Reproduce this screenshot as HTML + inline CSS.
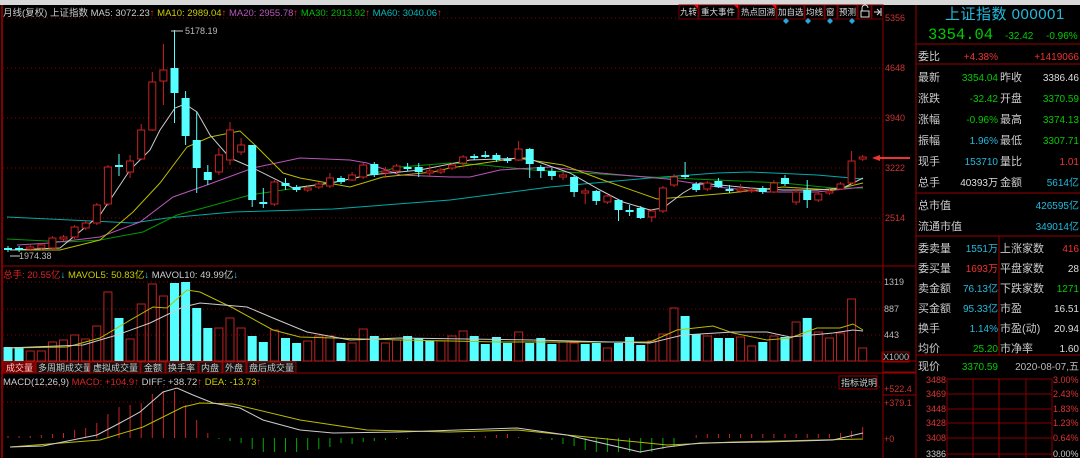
<!DOCTYPE html>
<html><head><meta charset="utf-8"><style>
html,body{margin:0;padding:0;background:#000;width:1080px;height:458px;overflow:hidden;font-family:"Liberation Sans","Noto Sans CJK SC",sans-serif}
svg{position:absolute;left:0;top:0}
.t{font-family:"Liberation Sans","Noto Sans CJK SC",sans-serif}
</style></head><body>
<svg id="s" width="1080" height="458" viewBox="0 0 1080 458" xmlns="http://www.w3.org/2000/svg">
<rect width="1080" height="458" fill="#000"/>
<rect width="1080" height="5" fill="#d8d8d8"/>
<line x1="2" y1="5" x2="2" y2="458" stroke="#a00" stroke-width="1.5"/>
<line x1="883" y1="5" x2="883" y2="458" stroke="#900"/>
<line x1="916" y1="5" x2="916" y2="458" stroke="#900"/>
<g stroke="#800" stroke-dasharray="1,3">
<line x1="3" y1="18" x2="883" y2="18"/><line x1="3" y1="68" x2="883" y2="68"/><line x1="3" y1="118" x2="883" y2="118"/><line x1="3" y1="168" x2="883" y2="168"/><line x1="3" y1="218" x2="883" y2="218"/>
<line x1="3" y1="282" x2="883" y2="282"/><line x1="3" y1="309" x2="883" y2="309"/><line x1="3" y1="335" x2="883" y2="335"/>
<line x1="3" y1="387" x2="883" y2="387"/><line x1="3" y1="402" x2="883" y2="402"/>
</g>
<line x1="3" y1="266" x2="916" y2="266" stroke="#900"/>
<line x1="3" y1="361" x2="916" y2="361" stroke="#900"/>
<line x1="3" y1="373" x2="916" y2="373" stroke="#900"/>
<g id="g"></g>
<g class="t" font-size="10">
<text x="3" y="16" fill="#ccc" font-size="9.5">月线(复权) 上证指数 MA5: 3072.23<tspan fill="#f22">↑</tspan> <tspan fill="#cc0">MA10: 2989.04</tspan><tspan fill="#f22">↑</tspan> <tspan fill="#b5b">MA20: 2955.78</tspan><tspan fill="#f22">↑</tspan> <tspan fill="#0b0">MA30: 2913.92</tspan><tspan fill="#f22">↑</tspan> <tspan fill="#0bb">MA60: 3040.06</tspan><tspan fill="#f22">↑</tspan></text>
<line x1="171" y1="31" x2="183" y2="31" stroke="#ccc"/>
<text x="185" y="34" fill="#bbb" font-size="9">5178.19</text>
<line x1="10" y1="256" x2="20" y2="256" stroke="#ccc"/>
<text x="19" y="259" fill="#bbb" font-size="9">1974.38</text>
<text x="3" y="278" fill="#d22" font-size="9.5">总手: 20.55亿<tspan fill="#3cf">↓</tspan> <tspan fill="#cc0">MAVOL5: 50.83亿</tspan><tspan fill="#3cf">↓</tspan> <tspan fill="#ccc">MAVOL10: 49.99亿</tspan><tspan fill="#3cf">↓</tspan></text>
<text x="3" y="385" fill="#ccc" font-size="9.5">MACD(12,26,9) <tspan fill="#d22">MACD: +104.9↑</tspan> <tspan fill="#ccc">DIFF: +38.72</tspan><tspan fill="#f22">↑</tspan> <tspan fill="#cc0">DEA: -13.73</tspan><tspan fill="#f22">↑</tspan></text>
<g fill="#c33" font-size="9">
<text x="885" y="21">5356</text><text x="885" y="71">4648</text><text x="885" y="121">3940</text><text x="885" y="171">3222</text><text x="885" y="221">2514</text>
<text x="884" y="392">+522.4</text><text x="884" y="406">+379.1</text><text x="884" y="442">+0</text>
</g>
<g fill="#bbb" font-size="9"><text x="884" y="285">1319</text><text x="884" y="312">887</text><text x="884" y="338">443</text></g>
<rect x="882" y="352" width="27" height="10" fill="none" stroke="#900"/>
<text x="883" y="360" fill="#bbb" font-size="9">X1000</text>
</g>
<g class="t" font-size="9" fill="#ccc">
<rect x="3" y="362" width="32" height="11" fill="#700" stroke="#900"/><text x="6" y="371" fill="#fcc">成交量</text>
<rect x="36" y="362" width="53" height="11" fill="#111" stroke="#900"/><text x="38" y="371">多周期成交量</text>
<rect x="90" y="362" width="50" height="11" fill="#111" stroke="#900"/><text x="93" y="371">虚拟成交量</text>
<rect x="141" y="362" width="24" height="11" fill="#111" stroke="#900"/><text x="144" y="371">金额</text>
<rect x="166" y="362" width="32" height="11" fill="#111" stroke="#900"/><text x="168" y="371">换手率</text>
<rect x="199" y="362" width="23" height="11" fill="#111" stroke="#900"/><text x="201" y="371">内盘</text>
<rect x="223" y="362" width="23" height="11" fill="#111" stroke="#900"/><text x="225" y="371">外盘</text>
<rect x="247" y="362" width="49" height="11" fill="#111" stroke="#900"/><text x="249" y="371">盘后成交量</text>
<rect x="839" y="376" width="38" height="13" fill="#000" stroke="#900"/><text x="841" y="386">指标说明</text>
</g>
<g class="t" font-size="8.5" fill="#ddd" stroke-width="1">
<g fill="#000" stroke="#700"><rect x="679" y="5" width="19" height="14"/><rect x="699" y="5" width="39" height="14"/><rect x="739" y="5" width="37" height="14"/><rect x="777" y="5" width="27" height="14"/><rect x="805" y="5" width="19" height="14"/><rect x="825" y="5" width="12" height="14"/><rect x="838" y="5" width="19" height="14"/><rect x="858" y="5" width="13" height="14"/><rect x="872" y="5" width="11" height="14"/></g>
<text x="680" y="15">九转</text><text x="701" y="15">重大事件</text><text x="741" y="15">热点回溯</text><text x="778" y="15">加自选</text><text x="806" y="15">均线</text><text x="826" y="15">窗</text><text x="839" y="15">预测</text>
<path d="M861 11h8v6h-8z M862 11v-3a3 3 0 0 1 6 0" fill="none" stroke="#ddd"/>
<path d="M874 12h5 M877 9l3 3-3 3 M881 8v8" stroke="#ddd" fill="none"/>
<g fill="#f00"><path d="M694 5h4v4z"/><path d="M734 5h4v4z"/><path d="M772 5h4v4z"/></g>
<g fill="#2ad"><path d="M786 18l3 3-3 3-3-3z"/><path d="M808 18l3 3-3 3-3-3z"/><path d="M830 18l3 3-3 3-3-3z"/><path d="M852 18l3 3-3 3-3-3z"/></g>
</g>
<path d="M872 158l8-3v2h30v2h-30v2z" fill="#e33"/>
<g class="t" font-size="11">
<text x="945" y="19" fill="#2bd" font-size="15" letter-spacing="0.5">上证指数 000001</text>
<text x="928" y="39" fill="#0c0" font-size="15.5" font-family="Liberation Mono,monospace">3354.04</text>
<text x="1005" y="39" fill="#0c0" font-size="10">-32.42</text>
<text x="1046" y="39" fill="#0c0" font-size="10">-0.96%</text>
<g stroke="#900"><line x1="916" y1="44" x2="1080" y2="44"/><line x1="916" y1="64" x2="1080" y2="64"/><line x1="916" y1="193" x2="1080" y2="193"/><line x1="916" y1="236" x2="1080" y2="236"/><line x1="916" y1="355" x2="1080" y2="355"/><line x1="999" y1="236" x2="999" y2="355"/><line x1="883" y1="395" x2="916" y2="395"/><line x1="883" y1="372" x2="916" y2="372"/></g>
<g fill="#ccc"><text x="918" y="60">委比</text><text x="918" y="81">最新</text><text x="918" y="102">涨跌</text><text x="918" y="123">涨幅</text><text x="918" y="144">振幅</text><text x="918" y="165">现手</text><text x="918" y="186">总手</text><text x="918" y="209">总市值</text><text x="918" y="230">流通市值</text>
<text x="1000" y="81">昨收</text><text x="1000" y="102">开盘</text><text x="1000" y="123">最高</text><text x="1000" y="144">最低</text><text x="1000" y="165">量比</text><text x="1000" y="186">金额</text>
<text x="918" y="252">委卖量</text><text x="918" y="272">委买量</text><text x="918" y="292">卖金额</text><text x="918" y="312">买金额</text><text x="918" y="332">换手</text><text x="918" y="352">均价</text>
<text x="1000" y="252">上涨家数</text><text x="1000" y="272">平盘家数</text><text x="1000" y="292">下跌家数</text><text x="1000" y="312">市盈</text><text x="1000" y="332">市盈(动)</text><text x="1000" y="352">市净率</text>
<text x="918" y="370">现价</text></g>
<g font-size="10" text-anchor="end">
<text x="998" y="60" fill="#e33">+4.38%</text><text x="1079" y="60" fill="#e33">+1419066</text>
<text x="998" y="81" fill="#0c0">3354.04</text><text x="1079" y="81" fill="#ddd">3386.46</text>
<text x="998" y="102" fill="#0c0">-32.42</text><text x="1079" y="102" fill="#0c0">3370.59</text>
<text x="998" y="123" fill="#0c0">-0.96%</text><text x="1079" y="123" fill="#0c0">3374.13</text>
<text x="998" y="144" fill="#2bd">1.96%</text><text x="1079" y="144" fill="#0c0">3307.71</text>
<text x="998" y="165" fill="#2bd">153710</text><text x="1079" y="165" fill="#e33">1.01</text>
<text x="998" y="186" fill="#ddd">40393万</text><text x="1079" y="186" fill="#2bd">5614亿</text>
<text x="1079" y="209" fill="#2bd">426595亿</text><text x="1079" y="230" fill="#2bd">349014亿</text>
<text x="998" y="252" fill="#2bd">1551万</text><text x="1079" y="252" fill="#e33">416</text>
<text x="998" y="272" fill="#e33">1693万</text><text x="1079" y="272" fill="#ddd">28</text>
<text x="998" y="292" fill="#2bd">76.13亿</text><text x="1079" y="292" fill="#0c0">1271</text>
<text x="998" y="312" fill="#2bd">95.33亿</text><text x="1079" y="312" fill="#ddd">16.51</text>
<text x="998" y="332" fill="#2bd">1.14%</text><text x="1079" y="332" fill="#ddd">20.94</text>
<text x="998" y="352" fill="#0c0">25.20</text><text x="1079" y="352" fill="#ddd">1.60</text>
<text x="998" y="370" fill="#0c0">3370.59</text><text x="1079" y="370" fill="#bbb">2020-08-07,五</text>
</g>
<g stroke="#800"><rect x="947" y="379" width="105" height="80" fill="none"/>
<line x1="947" y1="394" x2="1052" y2="394"/><line x1="947" y1="409" x2="1052" y2="409"/><line x1="947" y1="423" x2="1052" y2="423"/><line x1="947" y1="438" x2="1052" y2="438"/><line x1="947" y1="454" x2="1052" y2="454"/>
<line x1="973" y1="379" x2="973" y2="458"/><line x1="999" y1="379" x2="999" y2="458" stroke="#a00"/><line x1="1026" y1="379" x2="1026" y2="458"/></g>
<g font-size="9" fill="#d33"><text x="926" y="383">3488</text><text x="926" y="397">3469</text><text x="926" y="412">3448</text><text x="926" y="426">3428</text><text x="926" y="441">3408</text><text x="926" y="457" fill="#ccc">3386</text>
<text x="1053" y="383">3.00%</text><text x="1053" y="397">2.43%</text><text x="1053" y="412">1.83%</text><text x="1053" y="426">1.23%</text><text x="1053" y="441">0.64%</text><text x="1053" y="457" fill="#ccc">0.00%</text></g>
</g>
</svg>
<script>
var C=[[248,250,'c'],[248,250,'c'],[247,249,'r'],[245,248,'r'],[238,248,'r'],[237,239,'r',235,241],[227,237,'r'],[223,228,'r'],[205,223,'r'],[167,204,'r'],[165,167,'c',154,176],[161,172,'r',155,178],[130,159,'r',124,160],[82,130,'r',72,131],[70,81,'r',44,105],[68,93,'c',30,123],[98,136,'c',91,145],[140,168,'c',112,193],[172,180,'c',165,185],[155,172,'r',148,175],[130,160,'r',122,165],[145,152,'r',138,155],[145,200,'c',145,207],[202,204,'c',188,208],[182,204,'r'],[183,186,'c',178,190],[187,190,'c'],[188,190,'r'],[184,187,'r'],[178,186,'r',173,188],[178,182,'c'],[175,180,'r',172,181],[165,177,'r'],[164,175,'c'],[171,173,'r',167,178],[166,171,'r'],[167,169,'c',163,171],[167,172,'c',163,177],[171,173,'r',165,177],[170,172,'r'],[165,168,'r'],[157,163,'r'],[156,158,'c'],[155,157,'c',151,158],[155,160,'c'],[159,161,'c'],[149,160,'r',141,161],[149,164,'c',148,178],[167,171,'c',165,178],[171,176,'c',168,180],[175,177,'r',172,180],[177,192,'c',175,197],[191,193,'r',188,204],[191,201,'c',190,205],[196,202,'r'],[200,210,'c',199,221],[210,212,'c',205,216],[208,218,'c',206,219],[211,217,'r',209,222],[188,211,'r'],[177,185,'r',174,187],[175,177,'c',162,179],[184,190,'c'],[183,189,'r'],[181,187,'c',178,188],[189,191,'c',185,193],[189,191,'r',184,193],[190,191,'r'],[188,192,'c'],[183,192,'r',180,193],[178,184,'c',175,186],[192,202,'r',188,205],[190,200,'c',180,208],[194,200,'r',192,202],[191,193,'r'],[184,189,'r',182,190],[161,183,'r',151,184],[157,159,'r',155,161]];
var V=[[347,'c'],[347,'c'],[351,'r'],[351,'r'],[342,'r'],[340,'r'],[335,'r'],[339,'r'],[326,'r'],[292,'r'],[318,'c'],[339,'r'],[304,'r'],[284,'r'],[296,'r'],[283,'c'],[282,'c'],[308,'c'],[328,'c'],[328,'r'],[318,'r'],[328,'r'],[336,'c'],[342,'c'],[330,'r'],[338,'c'],[343,'c'],[341,'r'],[336,'r'],[336,'r'],[343,'c'],[343,'r'],[329,'r'],[336,'c'],[343,'r'],[340,'r'],
[336,'c'],[338,'c'],[341,'c'],[341,'r'],[336,'r'],[331,'r'],[336,'c'],[344,'c'],[337,'c'],[343,'c'],[332,'r'],[343,'c'],[338,'c'],[344,'c'],[342,'r'],[343,'r'],[344,'c'],[343,'c'],[348,'r'],[343,'c'],[337,'c'],[345,'c'],[341,'r'],[334,'r'],[308,'r'],[316,'c'],[334,'c'],[336,'r'],[338,'c'],[338,'c'],[337,'r'],[346,'r'],[342,'c'],[336,'r'],[337,'c'],[322,'r'],[318,'c'],[332,'r'],[338,'r'],[333,'r'],[299,'r'],[348,'r']];
var M=[436,436,436,435,434,433,430,428,423,414,407,405,403,394,392,391,405,420,433,439,441,443,449,452,452,452,452,450,449,447,443,444,442,441,440,439,439,438,438,438,438,437,436,436,435,434,437,438,439,440,444,446,450,452,452,452,452,453,452,449,447,438,435,434,434,434,434,434,434,434,434,434,434,434,434,433,431,427];
function X(i){return 8+i*11.1}
var h='';
function pl(p,c){return '<polyline fill="none" stroke="'+c+'" stroke-width="1" points="'+p+'"/>'}
h+=pl('7,217 133,223 167,218 233,212 333,209 450,200 550,187 650,178 717,173 750,172 817,175 863,179','#0aa');
h+=pl('7,239 67,242 100,240 143,232 177,215 207,207 250,195 283,190 333,183 400,167 450,163 483,165 533,170 583,173 650,177 717,180 783,183 833,188 863,188','#090');
h+=pl('17,245 50,243 100,237 140,222 173,197 207,185 253,168 300,158 350,160 367,163 400,175 450,177 470,177 500,170 550,167 600,173 667,179 717,187 767,192 817,192 863,187','#b5b');
h+=pl('10,250 60,250 100,240 133,212 160,183 187,147 210,137 240,131 257,147 283,173 300,178 350,187 383,177 433,172 450,168 517,158 563,165 603,180 657,199 683,197 730,193 783,187 833,190 863,183','#bb0');
h+=pl('10,250 60,248 100,215 130,170 150,150 160,130 175,108 185,104 197,112 210,135 230,158 253,168 293,188 330,183 370,175 420,170 470,160 527,158 570,173 600,190 623,202 650,210 663,208 683,193 700,183 750,188 783,190 817,190 843,188 863,178','#ccc');
C.forEach(function(c,i){var x=X(i),col=c[2]=='c'?'#5ff':'#c22';var t=c[0],b=c[1];var wt=c[3]||t-2,wb=c[4]||b+2;
h+='<line x1="'+x+'" y1="'+wt+'" x2="'+x+'" y2="'+wb+'" stroke="'+col+'"/>';
if(c[2]=='c')h+='<rect x="'+(x-4)+'" y="'+t+'" width="8" height="'+Math.max(2,b-t)+'" fill="#5ff"/>';
else h+='<rect x="'+(x-3.5)+'" y="'+t+'" width="7" height="'+Math.max(1,b-t)+'" fill="#000" stroke="#c22"/>';});
V.forEach(function(v,i){var x=X(i);if(v[1]=='c')h+='<rect x="'+(x-4.5)+'" y="'+v[0]+'" width="9" height="'+(361-v[0])+'" fill="#5ff"/>';else h+='<rect x="'+(x-4)+'" y="'+v[0]+'" width="8" height="'+(361-v[0])+'" fill="none" stroke="#b22"/>';});
h+=pl('7,348 67,347 100,338 127,322 153,307 167,308 187,290 200,292 233,308 273,330 300,337 333,338 400,340 500,342 650,342 677,330 713,326 733,333 767,340 790,338 817,328 840,328 853,324 863,330','#bb0');
h+=pl('7,348 83,345 117,335 150,323 183,307 200,303 247,307 273,318 307,332 350,340 400,338 533,340 650,343 683,335 733,332 767,332 790,337 833,333 853,330 863,331','#ccc');
M.forEach(function(m,i){var x=X(i);h+='<line x1="'+x+'" y1="438" x2="'+x+'" y2="'+m+'" stroke="'+(m<438?'#c22':'#0a0')+'"/>';});
h+=pl('10,447 100,440 143,427 183,407 200,403 233,404 300,420 367,430 450,432 517,430 667,445 733,442 863,439','#bb0');
h+=pl('10,447 43,446 97,435 120,423 140,412 163,392 177,388 193,395 213,403 240,408 263,420 300,430 333,433 400,432 517,428 567,435 640,452 667,447 700,443 767,442 833,440 863,433','#ccc');
document.getElementById('g').innerHTML=h;
</script>
</body></html>
